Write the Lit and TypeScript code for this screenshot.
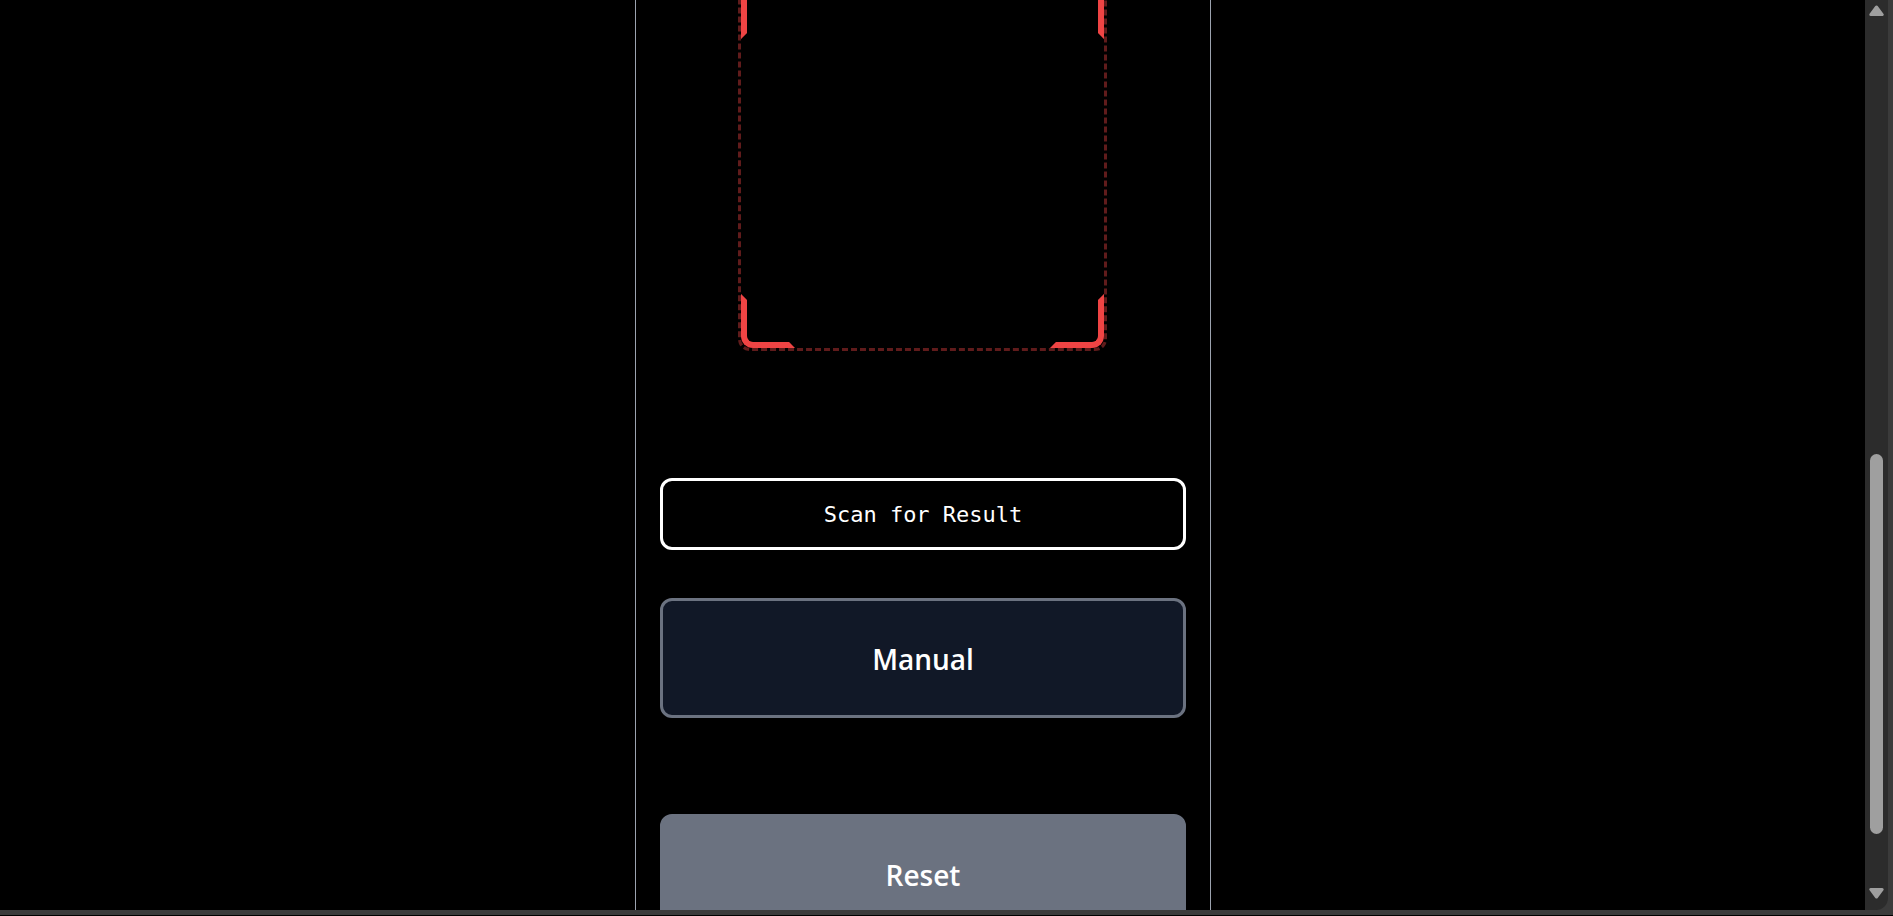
import { LitElement, html, css } from "lit";
import { customElement } from "lit/decorators.js";

@customElement("scan-frame")
class ScanFrame extends LitElement {
  static styles = css`
    :host {
      display: block;
    }
    .frame {
      box-sizing: border-box;
      position: relative;
      aspect-ratio: 1;
      border: 3px dashed rgba(239, 68, 68, 0.4);
      border-radius: 12px;
    }
    .corner {
      box-sizing: border-box;
      position: absolute;
      width: 54px;
      height: 54px;
      border: 6px solid transparent;
    }
    .tl {
      top: 0;
      left: 0;
      border-top-color: #ef4444;
      border-left-color: #ef4444;
      border-top-left-radius: 12px;
    }
    .tr {
      top: 0;
      right: 0;
      border-top-color: #ef4444;
      border-right-color: #ef4444;
      border-top-right-radius: 12px;
    }
    .bl {
      bottom: 0;
      left: 0;
      border-bottom-color: #ef4444;
      border-left-color: #ef4444;
      border-bottom-left-radius: 12px;
    }
    .br {
      bottom: 0;
      right: 0;
      border-bottom-color: #ef4444;
      border-right-color: #ef4444;
      border-bottom-right-radius: 12px;
    }
  `;

  render() {
    return html`
      <div class="frame">
        <span class="corner tl"></span>
        <span class="corner tr"></span>
        <span class="corner bl"></span>
        <span class="corner br"></span>
      </div>
    `;
  }
}

@customElement("page-scrollbar")
class PageScrollbar extends LitElement {
  static styles = css`
    :host {
      box-sizing: border-box;
      display: flex;
      flex-direction: column;
      align-items: center;
      width: 23px;
      padding: 4px 0 10px;
      background: #2c2c2c;
      border-bottom-right-radius: 12px;
    }
    .arrow {
      display: block;
      width: 15px;
      height: 13px;
      fill: #9f9f9f;
      stroke: #9f9f9f;
      stroke-width: 3;
      stroke-linejoin: round;
    }
    .track {
      flex: 1;
      display: flex;
      flex-direction: column;
      align-items: center;
    }
    .before {
      flex: 437;
    }
    .thumb {
      flex: 380;
      width: 13px;
      border-radius: 7px;
      background: #9f9f9f;
    }
    .after {
      flex: 53;
    }
  `;

  render() {
    return html`
      <svg class="arrow" viewBox="0 0 15 13" aria-hidden="true">
        <path d="M7.5 3 L13.2 10.6 H1.8 Z" />
      </svg>
      <div class="track">
        <div class="before"></div>
        <div class="thumb"></div>
        <div class="after"></div>
      </div>
      <svg class="arrow" viewBox="0 0 15 13" aria-hidden="true">
        <path d="M7.5 10 L1.8 2.4 H13.2 Z" />
      </svg>
    `;
  }
}

@customElement("app-root")
class AppRoot extends LitElement {
  static styles = css`
    :host {
      box-sizing: border-box;
      display: flex;
      height: 100vh;
      overflow: hidden;
      padding: 0 5px 5px 0;
      background: #3b3b3b;
      border-bottom: 1px solid #000;
      color: #fff;
      font-family: "Segoe UI", "Open Sans", "Noto Sans", sans-serif;
    }
    .view {
      box-sizing: border-box;
      flex: 1;
      overflow: hidden;
      padding-right: 19px;
      background: #000;
    }
    .column {
      box-sizing: border-box;
      max-width: 576px;
      min-height: 100%;
      margin: 0 auto;
      padding: 0 24px 24px;
      border: solid #9ca3af;
      border-width: 0 1px;
    }
    .scanner {
      margin: -18px 79px 0 78px;
      padding-bottom: 127px;
    }
    .button {
      box-sizing: border-box;
      display: block;
      width: 100%;
      padding: 1px 6px 0;
      border: 3px solid #6b7280;
      border-radius: 12px;
      color: inherit;
      font-family: inherit;
    }
    .scan {
      height: 72px;
      margin-bottom: 48px;
      border-color: #fff;
      background: #000;
      font-family: Consolas, "DejaVu Sans Mono", monospace;
      font-size: 22px;
      line-height: 36px;
    }
    .large {
      height: 120px;
      font-size: 28px;
      font-weight: 600;
      line-height: 42px;
    }
    .manual {
      margin-bottom: 96px;
      background: #111827;
    }
    .reset {
      background: #6b7280;
    }
  `;

  render() {
    return html`
      <main class="view">
        <div class="column">
          <scan-frame class="scanner"></scan-frame>
          <button class="button scan" type="button">Scan for Result</button>
          <button class="button large manual" type="button">Manual</button>
          <button class="button large reset" type="button">Reset</button>
        </div>
      </main>
      <page-scrollbar></page-scrollbar>
    `;
  }
}
